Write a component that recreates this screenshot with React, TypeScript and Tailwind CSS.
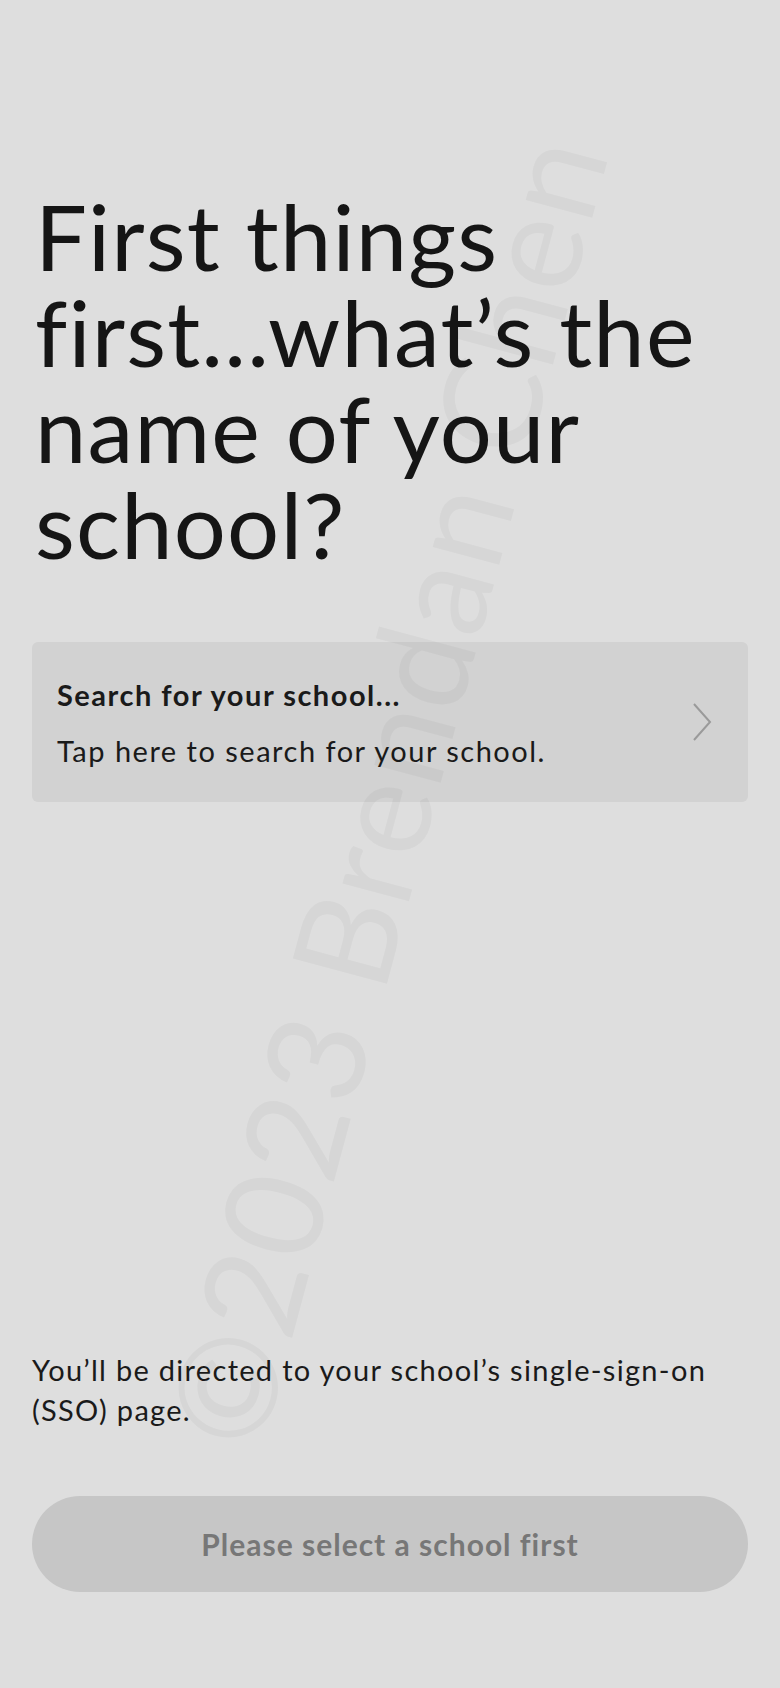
import React from 'react'

const font = { fontFamily: 'Lato, "Noto Sans", sans-serif' }

export default function App() {
  return (
    <div
      className="relative flex min-h-[1688px] w-[780px] flex-col overflow-hidden bg-[#dedede] px-8 pb-24 pt-[188px] text-[#151515]"
      style={font}
    >
      <h1 className="pl-[3px] text-[92px] font-normal leading-[96px] tracking-[1.2px]">
        First things first...what’s the name of your school?
      </h1>

      <button className="mt-[70px] flex h-[160px] w-full items-center justify-between rounded-md bg-[#d2d2d2] pl-[25px] pr-9 text-left">
        <div className="flex flex-col gap-[27px]">
          <span className="text-[29px] font-bold leading-none tracking-[1.5px] text-[#1a1a1a]">Search for your school...</span>
          <span className="text-[29px] leading-none tracking-[1.5px] text-[#1a1a1a]">Tap here to search for your school.</span>
        </div>
        <svg width="20" height="38" viewBox="0 0 20 38" fill="none">
          <path d="M2 1 L18 19 L2 37" stroke="#9a9a9a" strokeWidth="2" />
        </svg>
      </button>

      <div className="flex-1" />

      <p className="text-[29px] leading-[40px] tracking-[1.3px] text-[#1a1a1a]">
        You’ll be directed to your school’s single-sign-on (SSO) page.
      </p>

      <button className="mt-[66px] flex h-[96px] w-full items-center justify-center rounded-full bg-[#c6c6c6] text-[30px] font-bold tracking-[1px] text-[#777777]">
        Please select a school first
      </button>

      <div className="pointer-events-none absolute left-[385px] top-[790px] -translate-x-1/2 -translate-y-1/2 -rotate-[75deg] whitespace-nowrap text-[136px] font-normal leading-none tracking-[2px] text-black/[0.035]">
        ©2023 Brendan Chen
      </div>
    </div>
  )
}
